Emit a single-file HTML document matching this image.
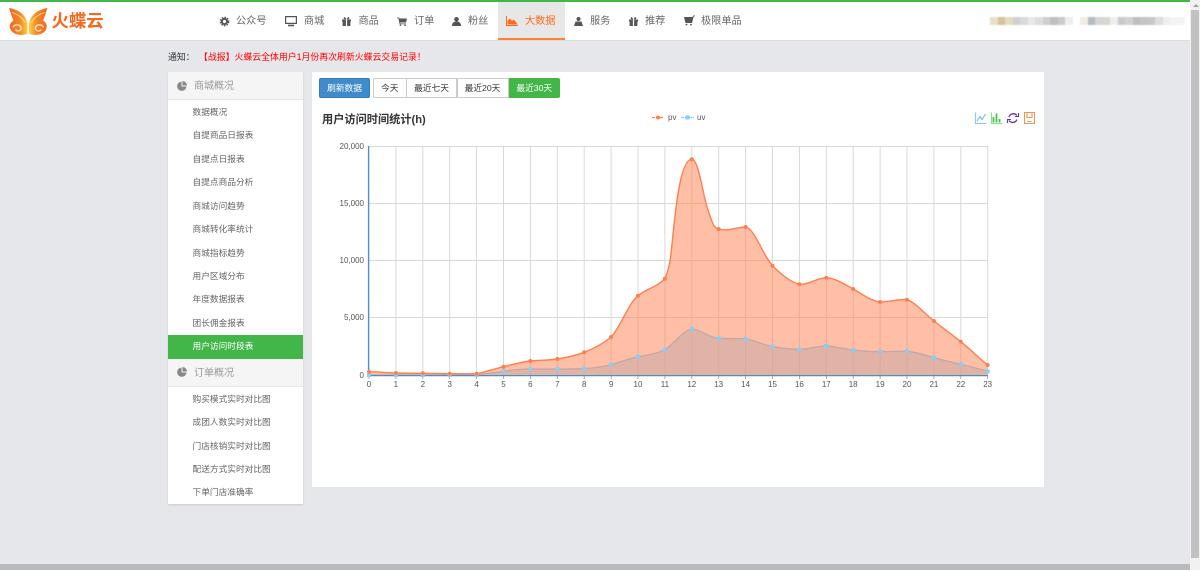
<!DOCTYPE html>
<html lang="zh"><head><meta charset="utf-8"><title>用户访问时间统计</title>
<style>
html,body{margin:0;padding:0;width:1200px;height:570px;overflow:hidden;background:#e6e7eb;font-family:"Liberation Sans","Noto Sans CJK SC",sans-serif}
#w{position:absolute;left:0;top:0;width:1200px;height:570px;filter:blur(.3px)}
.a{position:absolute;white-space:nowrap}
.nav{font-size:10.2px;color:#666;top:14.5px;line-height:14px}
.si{font-size:8.7px;color:#666;left:192.5px;line-height:12px}
.sh{font-size:10px;color:#999;left:194px;line-height:14px}
.btn{position:absolute;top:78px;height:20px;box-sizing:border-box;border:1px solid #ccc;background:#fff;color:#333;font-size:8.7px;line-height:18px;text-align:center}
svg{position:absolute;overflow:visible}
svg text{font-family:"Liberation Sans","Noto Sans CJK SC",sans-serif}
.px{position:absolute;top:17px;height:8px;width:7.5px}
</style></head><body><div id="w">
<div class="a" style="left:0;top:0;width:1200px;height:40px;background:#fff;border-bottom:1px solid #ddd"></div>
<div class="a" style="left:0;top:0;width:1200px;height:2px;background:#43b649"></div>

<svg style="left:0;top:0" width="60" height="40" viewBox="0 0 60 40">
<defs>
<linearGradient id="gl" x1="0" y1="0" x2="1" y2="0"><stop offset="0" stop-color="#f0651c"/><stop offset=".6" stop-color="#f58a25"/><stop offset="1" stop-color="#fbcf45"/></linearGradient>
</defs>
<g id="lw">
<path d="M9 8C16 9 24 13 26.500 20C28 24 27.800 30 27 34C23 35.500 15 35.500 11.500 31C8.500 27 9.500 23 13.500 20.500C11.500 16 10.500 12 9 8Z" fill="url(#gl)"/>
<path d="M12 12.500C17 14 22 17 25 22.500" fill="none" stroke="#fde3a8" stroke-width=".9"/>
<path d="M13 27.500C14 24 20 24 21 27.500C21.500 31 17 32 15.500 29.500" fill="none" stroke="#fde3c0" stroke-width="1.400"/>
</g>
<g transform="translate(56.500 0) scale(-1 1)">
<path d="M9 8C16 9 24 13 26.500 20C28 24 27.800 30 27 34C23 35.500 15 35.500 11.500 31C8.500 27 9.500 23 13.500 20.500C11.500 16 10.500 12 9 8Z" fill="url(#gl)"/>
<path d="M12 12.500C17 14 22 17 25 22.500" fill="none" stroke="#fde3a8" stroke-width=".9"/>
<path d="M13 27.500C14 24 20 24 21 27.500C21.500 31 17 32 15.500 29.500" fill="none" stroke="#fde3c0" stroke-width="1.400"/>
</g>
</svg>
<div class="a" style="left:51.500px;top:9px;font-size:17.4px;line-height:24px;font-weight:bold;color:#f2691f">火蝶云</div>

<div class="a" style="left:498px;top:2px;width:67px;height:38px;background:#e7e7e7;border-bottom:2px solid #ff8033;box-sizing:border-box"></div>

<svg style="left:219px;top:16px" width="11" height="11" viewBox="0 0 11 11"><circle cx="5.5" cy="5.5" r="2.6" fill="none" stroke="#555" stroke-width="2"/><circle cx="5.5" cy="5.5" r="4.2" fill="none" stroke="#555" stroke-width="1.3" stroke-dasharray="1.6 1.2"/></svg>
<div class="a nav" style="left:236px">公众号</div>
<svg style="left:285px;top:15.500px" width="12" height="11" viewBox="0 0 12 11"><path d="M.6.6H11.400V7.400H.6Z" fill="#fff" stroke="#555" stroke-width="1.200"/><path d="M3 9.500H9" stroke="#555" stroke-width="1.600"/></svg>
<div class="a nav" style="left:304px">商城</div>
<svg style="left:342px;top:16.500px" width="9" height="9" viewBox="0 0 9 9"><path d="M0 2.5H9V4.5H8.4V9H.6V4.5H0ZM3.9 2.5V9H5.1V2.5ZM2.2 2.2C1 1 2 0 3 .2L4.5 2.2 6 .2C7 0 8 1 6.8 2.2Z" fill="#555" fill-rule="evenodd"/></svg>
<div class="a nav" style="left:358.5px">商品</div>
<svg style="left:397px;top:16.500px" width="10" height="9" viewBox="0 0 10 9"><path d="M0 .5H2L2.4 1.5H10L9 5.500H3.200L3.400 6.500H9V7.300H2.600L1.400 1.300H0Z" fill="#555"/><circle cx="3.4" cy="8.2" r=".8" fill="#555"/><circle cx="8" cy="8.2" r=".8" fill="#555"/></svg>
<div class="a nav" style="left:414px">订单</div>
<svg style="left:452px;top:16.500px" width="9" height="9" viewBox="0 0 9 9"><circle cx="4.5" cy="2.3" r="2.3" fill="#555"/><path d="M0 9C0 5.500 2 4.500 4.500 4.500S9 5.500 9 9Z" fill="#555"/></svg>
<div class="a nav" style="left:468px">粉丝</div>
<svg style="left:506px;top:15.500px" width="12" height="10" viewBox="0 0 12 10"><path d="M.5 0V9.500H12" fill="none" stroke="#ff6a1a" stroke-width="1"/><path d="M1.500 8.500V5L4 2.500 6 5 7.500 3.500 9.500 5.500 11.500 8.500Z" fill="#ff6a1a"/></svg>
<div class="a nav" style="left:525px;color:#ff6a1a">大数据</div>
<svg style="left:574px;top:16.500px" width="9" height="9" viewBox="0 0 9 9"><circle cx="4.5" cy="2" r="2" fill="#555"/><path d="M1.500 4.500H7.500L9 9H0Z" fill="#555"/></svg>
<div class="a nav" style="left:590px">服务</div>
<svg style="left:629px;top:16.500px" width="9" height="9" viewBox="0 0 9 9"><path d="M0 2.5H9V4.5H8.4V9H.6V4.5H0ZM3.9 2.5V9H5.1V2.5ZM2.2 2.2C1 1 2 0 3 .2L4.500 2.200 6 .2C7 0 8 1 6.800 2.200Z" fill="#555" fill-rule="evenodd"/></svg>
<div class="a nav" style="left:645px">推荐</div>
<svg style="left:684px;top:15px" width="11" height="11" viewBox="0 0 11 11"><path d="M0 2H8.500L9.200 .5H11V1.300H9.800L8 8H1.500Z" fill="#555"/><circle cx="2.5" cy="9.6" r=".9" fill="#555"/><circle cx="7" cy="9.6" r=".9" fill="#555"/></svg>
<div class="a nav" style="left:701px">极限单品</div>

<div style="position:absolute;left:0;top:0;filter:blur(.5px)">
<div class="px" style="left:990px;background:#e9dfcc"></div><div class="px" style="left:997.5px;background:#d6c398"></div><div class="px" style="left:1005px;background:#e6dabf"></div><div class="px" style="left:1012.5px;background:#d0d0d0"></div><div class="px" style="left:1020px;background:#dadada"></div><div class="px" style="left:1027.5px;background:#e8e8e8"></div><div class="px" style="left:1035px;background:#dedede"></div><div class="px" style="left:1042.5px;background:#cfcfcf"></div><div class="px" style="left:1050px;background:#bfbfbf"></div><div class="px" style="left:1057.5px;background:#cbcbcb"></div><div class="px" style="left:1065px;background:#eeeef0"></div>
<div class="px" style="left:1080px;background:#f0ece4"></div><div class="px" style="left:1087.5px;background:#b6bbbf"></div><div class="px" style="left:1095px;background:#d6d6d6"></div><div class="px" style="left:1102.5px;background:#d8d8d2"></div><div class="px" style="left:1110px;background:#eeeeee"></div><div class="px" style="left:1117.5px;background:#cacaca"></div><div class="px" style="left:1125px;background:#d2d2d2"></div><div class="px" style="left:1132.5px;background:#bebebe"></div><div class="px" style="left:1140px;background:#c4c4c4"></div><div class="px" style="left:1147.5px;background:#c8c8c8"></div><div class="px" style="left:1155px;background:#dedede"></div><div class="px" style="left:1162.5px;background:#eeeeee"></div><div class="px" style="left:1170px;width:15px;background:#f4f4f4"></div>
</div>

<div class="a" style="left:168px;top:51px;font-size:8.9px;line-height:12px;color:#333">通知：</div>
<div class="a" style="left:199px;top:51px;font-size:8.9px;line-height:12px;color:#f00">【战报】火蝶云全体用户1月份再次刷新火蝶云交易记录！</div>

<!-- sidebar -->
<div class="a" style="left:168px;top:72px;width:134.5px;height:432px;background:#fff;box-shadow:0 1px 2px rgba(0,0,0,.12)"></div>
<div class="a" style="left:168px;top:72px;width:134.5px;height:27.5px;background:#f5f5f5;border-bottom:1px solid #e5e5e5;box-sizing:border-box"></div>
<svg style="left:177px;top:81px" width="10" height="10" viewBox="0 0 10 10"><path d="M4.5.5V5.5H9.5A4.7 4.7 0 1 1 4.5.5Z" fill="#888"/><path d="M5.5 0A4.6 4.6 0 0 1 10 4.5H5.5Z" fill="#888"/></svg>
<div class="a sh" style="top:80px">商城概况</div>
<div class="a si" style="top:106px">数据概况</div>
<div class="a si" style="top:129px">自提商品日报表</div>
<div class="a si" style="top:153px">自提点日报表</div>
<div class="a si" style="top:176px">自提点商品分析</div>
<div class="a si" style="top:199.5px">商城访问趋势</div>
<div class="a si" style="top:223px">商城转化率统计</div>
<div class="a si" style="top:246.5px">商城指标趋势</div>
<div class="a si" style="top:270px">用户区域分布</div>
<div class="a si" style="top:293px">年度数据报表</div>
<div class="a si" style="top:317px">团长佣金报表</div>
<div class="a" style="left:168px;top:334.5px;width:134.5px;height:24px;background:#43b649"></div>
<div class="a si" style="top:340px;color:#fff">用户访问时段表</div>
<div class="a" style="left:168px;top:358.5px;width:134.5px;height:28px;background:#f5f5f5;border-bottom:1px solid #e5e5e5;box-sizing:border-box"></div>
<svg style="left:177px;top:367px" width="10" height="10" viewBox="0 0 10 10"><path d="M4.5.5V5.5H9.5A4.7 4.7 0 1 1 4.5.5Z" fill="#888"/><path d="M5.5 0A4.6 4.6 0 0 1 10 4.5H5.5Z" fill="#888"/></svg>
<div class="a sh" style="top:366.5px">订单概况</div>
<div class="a si" style="top:393px">购买模式实时对比图</div>
<div class="a si" style="top:416px">成团人数实时对比图</div>
<div class="a si" style="top:439.5px">门店核销实时对比图</div>
<div class="a si" style="top:463px">配送方式实时对比图</div>
<div class="a si" style="top:486px">下单门店准确率</div>

<!-- main panel -->
<div class="a" style="left:312px;top:71.5px;width:732px;height:415px;background:#fff"></div>
<div class="btn" style="left:319px;width:51px;background:#428bca;border-color:#357ebd;color:#fff;border-radius:2px">刷新数据</div>
<div class="btn" style="left:373px;width:33.5px;border-radius:2px 0 0 2px">今天</div>
<div class="btn" style="left:406px;width:51px">最近七天</div>
<div class="btn" style="left:456.5px;width:52px">最近20天</div>
<div class="btn" style="left:508.5px;width:51.5px;background:#43b649;border-color:#43b649;color:#fff;border-radius:0 2px 2px 0">最近30天</div>
<div class="a" style="left:322px;top:112.5px;font-size:11.2px;line-height:15px;font-weight:bold;color:#333">用户访问时间统计(h)</div>

<svg style="left:0;top:0" width="1200" height="570" viewBox="0 0 1200 570">
<!-- legend -->
<path d="M652 117.5H664" stroke="#ff7f50" stroke-width="1.3" stroke-dasharray="3 1"/><circle cx="658" cy="117.5" r="2" fill="#ff7f50"/>
<text x="668" y="120" font-size="8" fill="#555">pv</text>
<path d="M681 117.5H694" stroke="#87cefa" stroke-width="1.3" stroke-dasharray="3 1"/><rect x="685.5" y="115.5" width="4" height="4" fill="#87cefa"/>
<text x="697" y="120" font-size="8" fill="#555">uv</text>
<!-- toolbox -->
<g fill="none" stroke-width="1.100">
<path d="M975.5 112.5V123.500H986.500" stroke="#8cc8fb"/><path d="M977 121L980 116.500 982 119.500 985.500 114" stroke="#6db5f8"/>
<path d="M991.5 112.5V123.500H1002.500" stroke="#85e085"/><path d="M993.5 122.5V117M996.5 122.500V113.500M999.500 122.500V119" stroke="#4fc04f" stroke-width="1.800"/>
<path d="M1017 115.5A4.6 4.6 0 0 0 1009 117M1009 120.500A4.6 4.6 0 0 0 1017 119.500" stroke="#6a3bb0" stroke-width="1.400"/><path d="M1018.5 113V116.500H1015M1007.500 123V119.500H1011" stroke="#6a3bb0"/>
<path d="M1024.5 112.5H1034.500V123.500H1024.500Z" stroke="#ea9558"/><path d="M1027 113V117.500H1032V113M1027.500 121.500H1031.500" stroke="#ea9558"/>
</g>
<!-- grid -->
<g stroke="#d9d9d9" stroke-width="1" fill="none">
<path d="M369 146.5H987.7M369 203.5H987.7M369 260.5H987.7M369 317.5H987.7"/>
<path d="M395.9 146V375M422.8 146V375M449.7 146V375M476.6 146V375M503.5 146V375M530.4 146V375M557.3 146V375M584.2 146V375M611.1 146V375M638 146V375M664.9 146V375M691.8 146V375M718.7 146V375M745.6 146V375M772.5 146V375M799.4 146V375M826.3 146V375M853.2 146V375M880.1 146V375M907 146V375M933.9 146V375M960.8 146V375M987.7 146V375"/>
</g>
<!-- uv area and line -->
<path fill="#87cefa" fill-opacity=".5" d="M369 375L476.6 375C485 374 494 372.6 503.5 371.3C512 370 521 369 530.4 369C539 369 548 369.2 557.3 369C566 369 575 368.8 584.2 368.7C593 368 602 367 611.1 364.7C620 362 629 358.5 638 356.7C647 355 656 354 664.9 349.7C674 344 682 331 691.8 329C700 329 709 338 718.7 338.3C727 339 737 338 745.6 339C755 340 763 345 772.5 346.7C781 348 790 349.3 799.4 349.3C808 349.3 817 346 826.3 346C835 346 844 349 853.2 350C862 351 871 351.7 880.1 351.7C889 351.7 898 351 907 351.3C916 352 925 355 933.9 357.7C943 360 951 362 960.8 364.3C970 366.5 979 369 987.7 371.3V375Z"/>
<path fill="none" stroke="#87cefa" stroke-width="1.3" d="M369 375L476.6 375C485 374 494 372.6 503.5 371.3C512 370 521 369 530.4 369C539 369 548 369.2 557.3 369C566 369 575 368.8 584.2 368.7C593 368 602 367 611.1 364.7C620 362 629 358.5 638 356.7C647 355 656 354 664.9 349.7C674 344 682 331 691.8 329C700 329 709 338 718.7 338.3C727 339 737 338 745.6 339C755 340 763 345 772.5 346.7C781 348 790 349.3 799.4 349.3C808 349.3 817 346 826.3 346C835 346 844 349 853.2 350C862 351 871 351.7 880.1 351.7C889 351.7 898 351 907 351.3C916 352 925 355 933.9 357.7C943 360 951 362 960.8 364.3C970 366.5 979 369 987.7 371.3"/>
<!-- pv area and line -->
<path fill="#ff7f50" fill-opacity=".5" d="M369 371.7C378 371.9 387 372.7 395.9 373C405 373.3 414 373.2 422.8 373.3C432 373.4 441 373.6 449.7 373.7C459 373.8 467 373.8 476.6 373.7C485.6 372 494.5 368.8 503.5 366.7C512.5 364.6 521.4 362 530.4 361C539.4 360.2 548.3 360.4 557.3 359C566.3 357.6 575.2 355.8 584.2 352.3C593.2 348.8 604 343 611.1 337C620 328 628 304 638 295.7C646 289 657 287 664.9 278.7C667 274 669 268 670.5 258C674 230 678 159.3 691.8 159.3C699 159.3 703 197 708 210C712 222 714 229 718.7 229C727 232 737 227 745.6 227C755 229 762 254 772.5 265.7C781 274 790 282 799.4 284.3C808 285 817 278 826.3 277.7C835 278 844 284 853.2 289C862 294 871 301 880.1 302C889 302 898 299 907 299.7C916 303 924 313 933.9 321C943 328 951 334 960.8 341.7C970 349 979 358 987.7 365V375H369Z"/>
<path fill="none" stroke="#ff7f50" stroke-width="1.4" d="M369 371.7C378 371.9 387 372.7 395.9 373C405 373.3 414 373.2 422.8 373.3C432 373.4 441 373.6 449.7 373.7C459 373.8 467 373.8 476.6 373.7C485.6 372 494.5 368.8 503.5 366.7C512.5 364.6 521.4 362 530.4 361C539.4 360.2 548.3 360.4 557.3 359C566.3 357.6 575.2 355.8 584.2 352.3C593.2 348.8 604 343 611.1 337C620 328 628 304 638 295.7C646 289 657 287 664.9 278.7C667 274 669 268 670.5 258C674 230 678 159.3 691.8 159.3C699 159.3 703 197 708 210C712 222 714 229 718.7 229C727 232 737 227 745.6 227C755 229 762 254 772.5 265.7C781 274 790 282 799.4 284.3C808 285 817 278 826.3 277.7C835 278 844 284 853.2 289C862 294 871 301 880.1 302C889 302 898 299 907 299.7C916 303 924 313 933.9 321C943 328 951 334 960.8 341.7C970 349 979 358 987.7 365"/>
<!-- axes -->
<path d="M368.6 146V376" stroke="#4a90c8" stroke-width="1.4"/>
<path d="M368 375.6H988" stroke="#4a90c8" stroke-width="1.2"/>
<path d="M369 376V379M395.9 376V379M422.8 376V379M449.7 376V379M476.6 376V379M503.5 376V379M530.4 376V379M557.3 376V379M584.2 376V379M611.1 376V379M638 376V379M664.9 376V379M691.8 376V379M718.7 376V379M745.6 376V379M772.5 376V379M799.4 376V379M826.3 376V379M853.2 376V379M880.1 376V379M907 376V379M933.9 376V379M960.8 376V379M987.7 376V379" stroke="#888" stroke-width=".7"/>
<!-- uv markers -->
<g fill="#87cefa">
<rect x="367" y="373" width="4" height="4"/><rect x="393.9" y="373" width="4" height="4"/><rect x="420.8" y="373" width="4" height="4"/><rect x="447.7" y="373" width="4" height="4"/><rect x="474.6" y="373" width="4" height="4"/><rect x="501.5" y="369.3" width="4" height="4"/><rect x="528.4" y="367" width="4" height="4"/><rect x="555.3" y="367" width="4" height="4"/><rect x="582.2" y="366.7" width="4" height="4"/><rect x="609.1" y="362.7" width="4" height="4"/><rect x="636" y="354.7" width="4" height="4"/><rect x="662.9" y="347.7" width="4" height="4"/><rect x="689.8" y="327" width="4" height="4"/><rect x="716.7" y="336.3" width="4" height="4"/><rect x="743.6" y="337" width="4" height="4"/><rect x="770.5" y="344.7" width="4" height="4"/><rect x="797.4" y="347.3" width="4" height="4"/><rect x="824.3" y="344" width="4" height="4"/><rect x="851.2" y="348" width="4" height="4"/><rect x="878.1" y="349.7" width="4" height="4"/><rect x="905" y="349.3" width="4" height="4"/><rect x="931.9" y="355.7" width="4" height="4"/><rect x="958.8" y="362.3" width="4" height="4"/><rect x="985.7" y="369.3" width="4" height="4"/>
</g>
<!-- pv markers -->
<g fill="#ff7f50">
<circle cx="369" cy="371.7" r="2"/><circle cx="395.9" cy="373" r="2"/><circle cx="422.8" cy="373.3" r="2"/><circle cx="449.7" cy="373.7" r="2"/><circle cx="476.6" cy="373.7" r="2"/><circle cx="503.5" cy="366.7" r="2"/><circle cx="530.4" cy="361" r="2"/><circle cx="557.3" cy="359" r="2"/><circle cx="584.2" cy="352.3" r="2"/><circle cx="611.1" cy="337" r="2"/><circle cx="638" cy="295.7" r="2"/><circle cx="664.9" cy="278.7" r="2"/><circle cx="691.8" cy="159.3" r="2"/><circle cx="718.7" cy="229" r="2"/><circle cx="745.6" cy="227" r="2"/><circle cx="772.5" cy="265.7" r="2"/><circle cx="799.4" cy="284.3" r="2"/><circle cx="826.3" cy="277.7" r="2"/><circle cx="853.2" cy="289" r="2"/><circle cx="880.1" cy="302" r="2"/><circle cx="907" cy="299.7" r="2"/><circle cx="933.9" cy="321" r="2"/><circle cx="960.8" cy="341.7" r="2"/><circle cx="987.7" cy="365" r="2"/>
</g>
<!-- labels -->
<g font-size="8" fill="#555" text-anchor="end">
<text x="364" y="149">20,000</text><text x="364" y="206">15,000</text><text x="364" y="263">10,000</text><text x="364" y="320">5,000</text><text x="364" y="378">0</text>
</g>
<g font-size="8" fill="#555" text-anchor="middle">
<text x="369" y="387">0</text><text x="395.9" y="387">1</text><text x="422.8" y="387">2</text><text x="449.7" y="387">3</text><text x="476.6" y="387">4</text><text x="503.5" y="387">5</text><text x="530.4" y="387">6</text><text x="557.3" y="387">7</text><text x="584.2" y="387">8</text><text x="611.1" y="387">9</text><text x="638" y="387">10</text><text x="664.9" y="387">11</text><text x="691.8" y="387">12</text><text x="718.7" y="387">13</text><text x="745.6" y="387">14</text><text x="772.5" y="387">15</text><text x="799.4" y="387">16</text><text x="826.3" y="387">17</text><text x="853.2" y="387">18</text><text x="880.1" y="387">19</text><text x="907" y="387">20</text><text x="933.9" y="387">21</text><text x="960.8" y="387">22</text><text x="987.7" y="387">23</text>
</g>
</svg>

<!-- scrollbars -->
<div class="a" style="left:1190px;top:0;width:10px;height:570px;background:#f1f1f1"></div>
<div class="a" style="left:1191px;top:10px;width:8px;height:548px;background:#c1c1c1"></div>
<div class="a" style="left:1192.5px;top:4px;width:0;height:0;border:3px solid transparent;border-top:0;border-bottom:3px solid #a3a3a3"></div>
<div class="a" style="left:0;top:564px;width:1190px;height:6px;background:#b9bbb9"></div>
</div></body></html>
